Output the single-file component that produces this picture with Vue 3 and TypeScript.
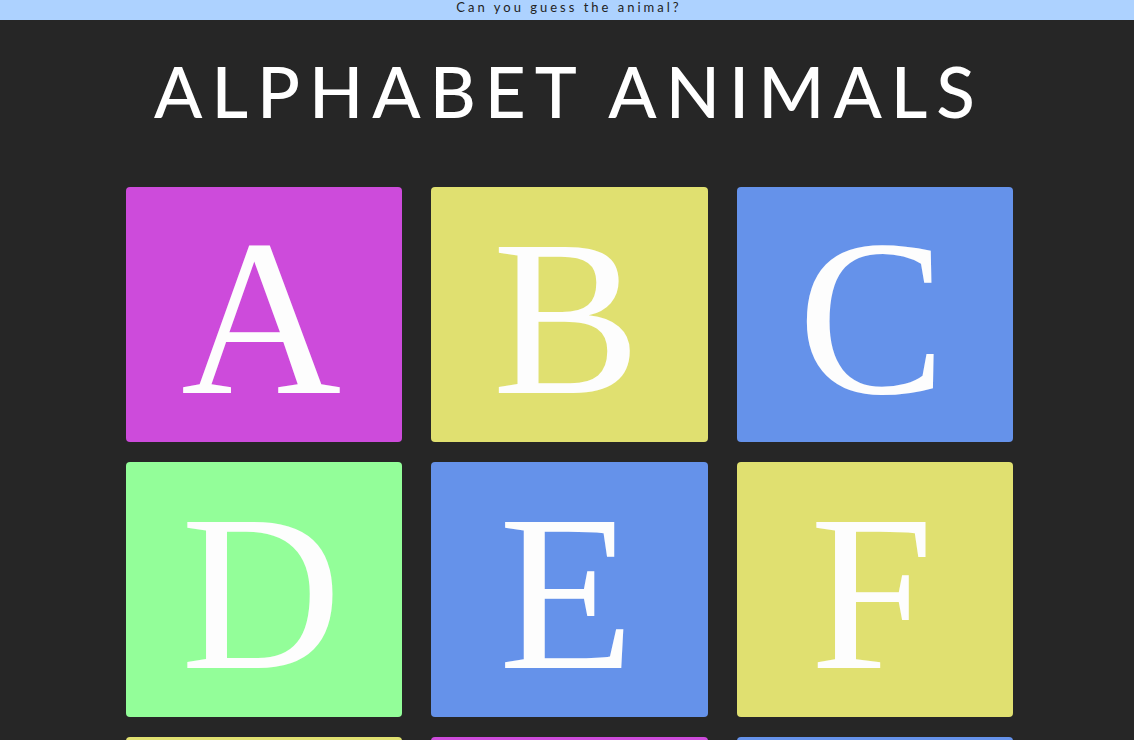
<script setup lang="ts">
interface Card {
  letter: string
  tone: 'purple' | 'yellow' | 'blue' | 'green'
}

const cards: Card[] = [
  { letter: 'A', tone: 'purple' },
  { letter: 'B', tone: 'yellow' },
  { letter: 'C', tone: 'blue' },
  { letter: 'D', tone: 'green' },
  { letter: 'E', tone: 'blue' },
  { letter: 'F', tone: 'yellow' },
  { letter: 'G', tone: 'yellow' },
  { letter: 'H', tone: 'purple' },
  { letter: 'I', tone: 'blue' },
]
</script>

<template>
  <div class="page">
    <p class="banner">Can you guess the animal?</p>
    <h1 class="title">ALPHABET ANIMALS</h1>
    <main class="grid">
      <div v-for="card in cards" :key="card.letter" class="card" :class="card.tone">
        {{ card.letter }}
      </div>
    </main>
  </div>
</template>

<style>
body {
  margin: 0;
  background: #262626;
}
html {
  scrollbar-width: none;
}
</style>

<style scoped>
.page {
  font-family: "Gill Sans", "Gill Sans MT", Lato, sans-serif;
}
.banner {
  margin: 0;
  padding: 0 0 6px 4px;
  background: #add2ff;
  color: #222;
  font-size: 13px;
  line-height: 14px;
  letter-spacing: 3px;
  text-align: center;
}
.title {
  margin: 25px 0 50px;
  padding-left: 4px;
  color: #fff;
  font-size: 71px;
  font-weight: 500;
  line-height: 92px;
  letter-spacing: 9px;
  text-align: center;
}
.grid {
  display: grid;
  grid-template-columns: repeat(3, 1fr);
  gap: 20px 29px;
  margin: 0 121px 20px 126px;
}
.card {
  padding: 8px 6px 0 0;
  border-radius: 4px;
  color: #fdfdfd;
  font-family: "Liberation Serif", serif;
  font-size: 222px;
  line-height: 247px;
  text-align: center;
}
.purple { background: #cd4bdb; }
.yellow { background: #e0e070; }
.blue { background: #6592ea; }
.green { background: #93fe99; }
</style>
